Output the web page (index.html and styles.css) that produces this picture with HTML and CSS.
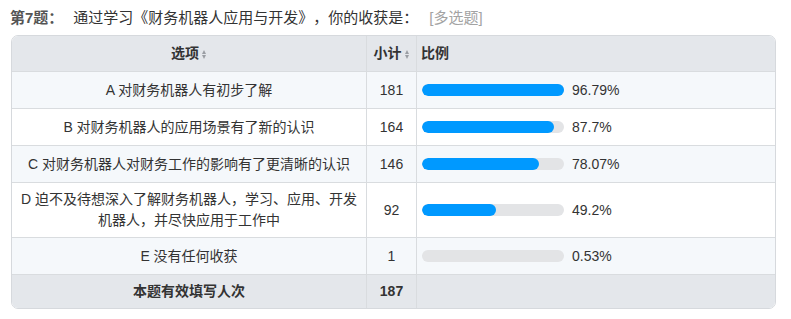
FILE: index.html
```html
<!DOCTYPE html>
<html lang="zh-CN">
<head>
<meta charset="utf-8">
<title>第7题</title>
<link rel="stylesheet" href="styles.css">
</head>
<body>
<div class="q">
  <div class="q-title"><span class="q-no">第7题：</span><span class="q-text">通过学习《财务机器人应用与开发》，你的收获是：</span><span class="q-type">[多选题]</span></div>
  <div class="tbl">
    <div class="row head">
      <div class="cell c1">选项<span class="sort"></span></div>
      <div class="cell c2">小计<span class="sort"></span></div>
      <div class="cell c3 left">比例</div>
    </div>
    <div class="row alt">
      <div class="cell c1">A 对财务机器人有初步了解</div>
      <div class="cell c2">181</div>
      <div class="cell c3"><div class="bar"><div class="fill" style="width:145px"></div></div><span class="pct">96.79%</span></div>
    </div>
    <div class="row">
      <div class="cell c1">B 对财务机器人的应用场景有了新的认识</div>
      <div class="cell c2">164</div>
      <div class="cell c3"><div class="bar"><div class="fill" style="width:131.5px"></div></div><span class="pct">87.7%</span></div>
    </div>
    <div class="row alt">
      <div class="cell c1">C 对财务机器人对财务工作的影响有了更清晰的认识</div>
      <div class="cell c2">146</div>
      <div class="cell c3"><div class="bar"><div class="fill" style="width:117px"></div></div><span class="pct">78.07%</span></div>
    </div>
    <div class="row tall">
      <div class="cell c1">D 迫不及待想深入了解财务机器人，学习、应用、开发<br>机器人，并尽快应用于工作中</div>
      <div class="cell c2">92</div>
      <div class="cell c3"><div class="bar"><div class="fill" style="width:74px"></div></div><span class="pct">49.2%</span></div>
    </div>
    <div class="row alt">
      <div class="cell c1">E 没有任何收获</div>
      <div class="cell c2">1</div>
      <div class="cell c3"><div class="bar"><div class="fill" style="width:0px"></div></div><span class="pct">0.53%</span></div>
    </div>
    <div class="row foot">
      <div class="cell c1">本题有效填写人次</div>
      <div class="cell c2">187</div>
      <div class="cell c3"></div>
    </div>
  </div>
</div>
</body>
</html>
```
FILE: styles.css
```css
html, body {
  margin: 0;
  padding: 0;
  background: #fff;
}
body {
  font-family: "Liberation Sans", "Noto Sans CJK SC", sans-serif;
  font-size: 14px;
  color: #333;
  text-spacing-trim: space-all;
}
.q {
  padding: 7px 15px 0 10px;
}
.q-title {
  font-size: 15px;
  line-height: 21px;
  height: 21px;
  color: #333;
  white-space: nowrap;
}
.q-no {
  font-weight: bold;
  color: #555;
}
.q-text {
  margin-left: 10px;
}
.q-type {
  margin-left: 11px;
  color: #a3a3a3;
}
.tbl {
  margin-top: 7px;
  margin-left: 1px;
  border: 1px solid #d6d9dd;
  border-radius: 7px;
  overflow: hidden;
  width: 763px;
}
.row {
  display: grid;
  grid-template-columns: 354px 50px 1fr;
  min-height: 36px;
  border-top: 1px solid #d9dcdf;
}
.row.alt {
  background: #f5f8fb;
}
.row.head {
  border-top: 0;
  min-height: 35px;
  background: #e4e7eb;
  font-weight: bold;
}
.row.tall {
  min-height: 54px;
}
.row.foot {
  min-height: 33px;
  background: #e4e7eb;
  font-weight: bold;
}
.cell {
  display: flex;
  align-items: center;
  justify-content: center;
  text-align: center;
  line-height: 21px;
  padding: 0 6px;
}
.c2, .c3 {
  border-left: 1px solid #d9dcdf;
}
.c2 {
  padding: 0;
}
.c3 {
  justify-content: flex-start;
  padding: 0 0 0 5px;
}
.head .c3 {
  padding-left: 4px;
}
.sort {
  display: inline-block;
  width: 5px;
  height: 9px;
  margin-left: 3px;
  margin-top: 1px;
  position: relative;
}
.sort::before, .sort::after {
  content: "";
  position: absolute;
  left: 0;
  border-left: 2.5px solid transparent;
  border-right: 2.5px solid transparent;
}
.sort::before {
  top: 0;
  border-bottom: 4px solid #9a9ea4;
}
.sort::after {
  bottom: 0;
  border-top: 4px solid #9a9ea4;
}
.bar {
  width: 142px;
  height: 12px;
  border-radius: 6px;
  background: #e3e4e6;
  overflow: hidden;
  flex: none;
}
.fill {
  height: 100%;
  border-radius: 6px;
  background: #0099ff;
}
.pct {
  margin-left: 8px;
  color: #333;
}
```
